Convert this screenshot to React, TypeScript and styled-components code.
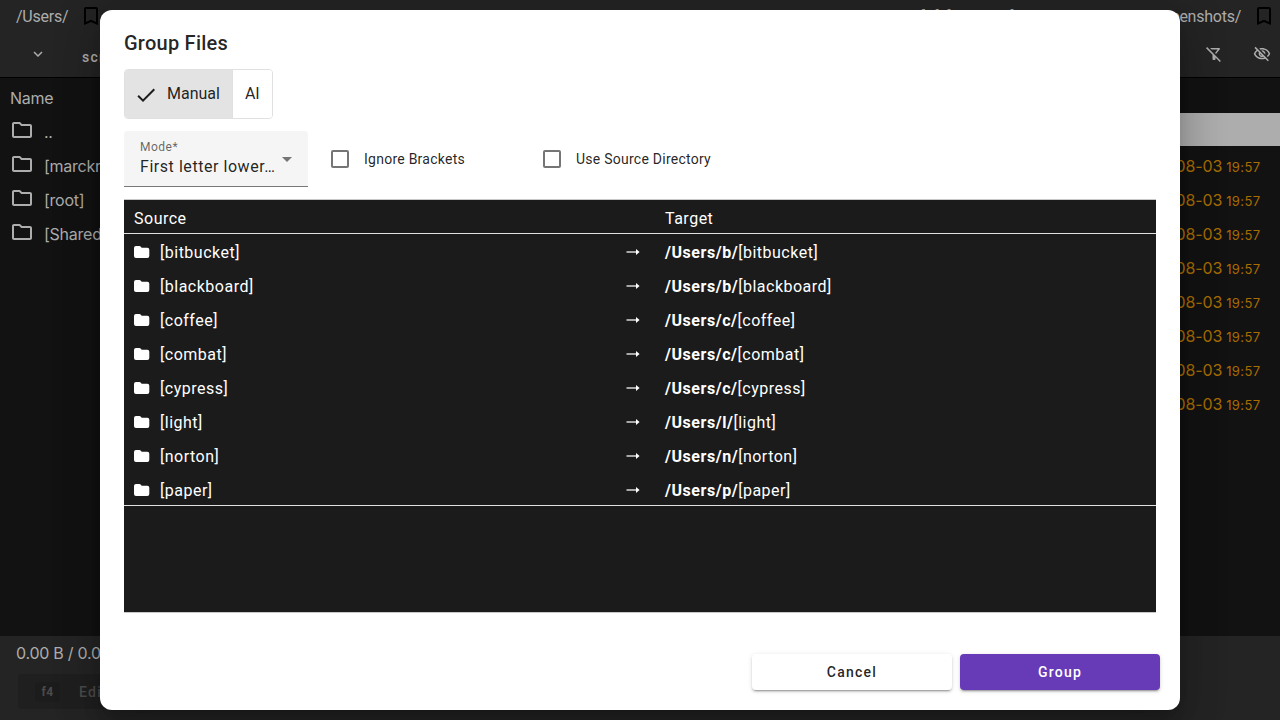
import React from "react";
import styled, { createGlobalStyle } from "styled-components";
import {
  MdBookmarkBorder,
  MdCheck,
  MdExpandMore,
  MdOutlineFilterAltOff,
  MdOutlineFolder,
  MdOutlineVisibilityOff,
} from "react-icons/md";

const GlobalStyle = createGlobalStyle`
  * { box-sizing: border-box; }
  body { margin: 0; overflow: hidden; background: #121212; font-family: Roboto, sans-serif; }
  svg { display: block; flex: none; }
`;

const Page = styled.div`
  position: relative;
  width: 1280px;
  height: 720px;
  display: flex;
  flex-direction: column;
  overflow: hidden;
  background: #121212;
  color: #adadad;
  font: 400 16px/24px Inter, sans-serif;
`;

const PathBar = styled.div`
  display: flex;
  justify-content: space-between;
  height: 32px;
  padding: 0 4px 0 16px;
  background: #242424;
`;

const PathItem = styled.div`
  display: flex;
  align-items: center;
  gap: 11px;
  font-family: Roboto, sans-serif;
  letter-spacing: -0.25px;
  white-space: nowrap;
  svg { color: #000; }
`;

const PathText = styled.span`
  padding-top: 2px;
`;

const TabBar = styled.div`
  display: flex;
  justify-content: space-between;
  align-items: center;
  height: 46px;
  padding: 0 9px 2px 29px;
  background: #242424;
  border-bottom: 1px solid #000;
`;

const TabGroup = styled.div<{ $gap: number }>`
  display: flex;
  align-items: center;
  gap: ${(p) => p.$gap}px;
`;

const TabLabel = styled.span`
  padding-top: 7px;
  font: 500 14px/20px Roboto, sans-serif;
  letter-spacing: 1.25px;
`;

const Panels = styled.div`
  display: flex;
  height: 558px;
`;

const Panel = styled.div`
  flex: 1;
  padding-top: 3px;
`;

const PanelRow = styled.div<{ $selected?: boolean }>`
  display: flex;
  align-items: center;
  gap: 10px;
  height: ${(p) => (p.$selected ? 33 : 34)}px;
  padding-left: 10px;
  background: ${(p) => (p.$selected ? "#adadad" : "transparent")};
  svg { position: relative; top: -2px; }
`;

const FileName = styled.span`
  letter-spacing: -0.25px;
`;

const DateRow = styled.div`
  display: flex;
  justify-content: flex-end;
  align-items: baseline;
  gap: 4px;
  height: 34px;
  padding: 0 20px 0 0;
  line-height: 40px;
  color: #a86c00;
  span { letter-spacing: -0.1px; }
  small { font-size: 13px; letter-spacing: 0.35px; margin-right: -0.35px; }
`;

const HeadSpace = styled.div`
  height: 32px;
`;

const Footer = styled.div`
  flex: 1;
  padding: 5px 16px;
  background: #242424;
`;

const KeyButton = styled.div`
  display: flex;
  align-items: center;
  gap: 19px;
  width: 150px;
  height: 35px;
  margin: 9px 0 0 2px;
  padding-left: 17px;
  border-radius: 4px;
  background: #1f1f1f;
  color: #4b4b4b;
  font: 500 14px/20px Roboto, sans-serif;
  letter-spacing: 1.25px;
`;

const KeyCap = styled.span`
  width: 25px;
  border-radius: 3px;
  background: #1c1c1c;
  text-align: center;
  font-size: 12px;
  font-weight: 700;
  letter-spacing: 0.5px;
`;

const Overlay = styled.div`
  position: absolute;
  inset: 0;
  display: flex;
  align-items: center;
  justify-content: center;
`;

const Dialog = styled.section`
  display: flex;
  flex-direction: column;
  width: 1080px;
  height: 700px;
  padding: 17px 24px 20px;
  border-radius: 12px;
  background: #fff;
  color: rgba(0, 0, 0, 0.87);
  box-shadow: 0 11px 15px -7px rgba(0, 0, 0, 0.2), 0 24px 38px 3px rgba(0, 0, 0, 0.14),
    0 9px 46px 8px rgba(0, 0, 0, 0.12);
  font: 400 16px/24px Roboto, sans-serif;
`;

const Title = styled.h2`
  margin: 0 0 10px;
  font-size: 20px;
  line-height: 32px;
  font-weight: 500;
  letter-spacing: 0.25px;
`;

const Toggle = styled.div`
  display: flex;
  align-self: flex-start;
  width: 149px;
  height: 50px;
  overflow: hidden;
  border: 1px solid #e0e0e0;
  border-radius: 4px;
`;

const ToggleOption = styled.div<{ $on?: boolean }>`
  display: flex;
  align-items: center;
  gap: 9px;
  padding: 0 12px 0 ${(p) => (p.$on ? 9 : 12)}px;
  background: ${(p) => (p.$on ? "#e3e3e3" : "#fff")};
  & + & { border-left: 1px solid #e0e0e0; }
  svg { margin-top: 2px; }
`;

const Options = styled.div`
  display: flex;
  height: 56px;
  margin: 12px 0;
`;

const Select = styled.div`
  display: flex;
  align-items: center;
  width: 184px;
  margin-right: 23px;
  padding: 0 16px;
  border-bottom: 1px solid #777;
  border-radius: 4px 4px 0 0;
  background: #f5f5f5;
`;

const SelectText = styled.div`
  flex: 1;
  padding-top: 1px;
  letter-spacing: 0.55px;
  white-space: nowrap;
`;

const SelectLabel = styled.div`
  color: rgba(0, 0, 0, 0.6);
  font-size: 12px;
  line-height: 16px;
  letter-spacing: 0.5px;
`;

const Caret = styled.span`
  margin-top: 1px;
  border: 5px solid transparent;
  border-top-color: #757575;
  border-bottom: 0;
`;

const CheckOption = styled.label`
  display: flex;
  align-items: center;
  gap: 15px;
  width: 212px;
  font-size: 14px;
  line-height: 20px;
  letter-spacing: 0.25px;
`;

const Box = styled.span`
  width: 18px;
  height: 18px;
  border: 2px solid #757575;
  border-radius: 2px;
`;

const Table = styled.div`
  height: 414px;
  border-top: 1px solid #c8c8c8;
  border-bottom: 1px solid #c8c8c8;
  background: #1b1b1b;
  color: #fff;
  letter-spacing: 0.5px;
  b { letter-spacing: 0.54px; }
`;

const Row = styled.div<{ $line?: boolean }>`
  display: grid;
  grid-template-columns: 26px 466px 39px 1fr;
  align-items: center;
  height: 34px;
  padding: 5px 10px 0;
  border-bottom: 1px solid ${(p) => (p.$line ? "#e0e0e0" : "transparent")};
`;

const FolderIcon = styled.svg`
  margin-top: -2px;
`;

const Arrow = styled.svg`
  margin-top: -2px;
`;

const Actions = styled.div`
  display: flex;
  gap: 8px;
  justify-content: flex-end;
  margin: auto -4px 0 0;
`;

const Button = styled.button<{ $primary?: boolean }>`
  width: 200px;
  height: 36px;
  padding: 0;
  border: 0;
  border-radius: 4px;
  background: ${(p) => (p.$primary ? "#673ab7" : "#fff")};
  color: ${(p) => (p.$primary ? "#fff" : "rgba(0, 0, 0, 0.87)")};
  box-shadow: 0 3px 1px -2px rgba(0, 0, 0, 0.2), 0 2px 2px rgba(0, 0, 0, 0.14), 0 1px 5px rgba(0, 0, 0, 0.12);
  font: 500 14px/36px Roboto, sans-serif;
  letter-spacing: 1.25px;
`;

const folders = ["..", "[marckronberg]", "[root]", "[Shared]"];
const names = ["bitbucket", "blackboard", "coffee", "combat", "cypress", "light", "norton", "paper"];

export default function App() {
  return (
    <Page>
      <GlobalStyle />
      <PathBar>
        <PathItem><PathText>/Users/</PathText><MdBookmarkBorder size={24} /></PathItem>
        <PathItem>
          <PathText>/Users/marckronberg/WebProjects/fnf/files-and-folders/docs/public/screenshots/</PathText>
          <MdBookmarkBorder size={24} />
        </PathItem>
      </PathBar>
      <TabBar>
        <TabGroup $gap={35}>
          <MdExpandMore size={18} />
          <TabLabel>screenshots</TabLabel>
        </TabGroup>
        <TabGroup $gap={30}>
          <MdOutlineFilterAltOff size={18} />
          <MdOutlineVisibilityOff size={18} />
        </TabGroup>
      </TabBar>
      <Panels>
        <Panel>
          <PanelRow><FileName>Name</FileName></PanelRow>
          {folders.map((f) => (
            <PanelRow key={f}>
              <MdOutlineFolder size={24} />
              <FileName>{f}</FileName>
            </PanelRow>
          ))}
        </Panel>
        <Panel>
          <HeadSpace />
          <PanelRow $selected />
          {names.map((n) => (
            <DateRow key={n}><span>2023-08-03</span><small>19:57</small></DateRow>
          ))}
        </Panel>
      </Panels>
      <Footer>
        <FileName>0.00 B / 0.00 B</FileName>
        <KeyButton><KeyCap>f4</KeyCap>Edit</KeyButton>
      </Footer>
      <Overlay>
        <Dialog>
          <Title>Group Files</Title>
          <Toggle>
            <ToggleOption $on><MdCheck size={24} />Manual</ToggleOption>
            <ToggleOption>AI</ToggleOption>
          </Toggle>
          <Options>
            <Select>
              <SelectText>
                <SelectLabel>Mode*</SelectLabel>
                First letter lower…
              </SelectText>
              <Caret />
            </Select>
            <CheckOption><Box />Ignore Brackets</CheckOption>
            <CheckOption><Box />Use Source Directory</CheckOption>
          </Options>
          <Table>
            <Row $line><span>Source</span><span /><span /><span>Target</span></Row>
            {names.map((n, i) => (
              <Row key={n} $line={i === names.length - 1}>
                <FolderIcon width="16" height="14" viewBox="0 0 16 14">
                  <path
                    d="M2 1H5.4C6 1 6.4 1.2 6.8 1.7L7.7 2.8H13.3Q15.3 2.8 15.3 4.8V11Q15.3 13 13.3 13H2Q0 13 0 11V3Q0 1 2 1Z"
                    fill="#fff"
                  />
                </FolderIcon>
                <span>[{n}]</span>
                <Arrow width="14" height="8" viewBox="0 0 14 8">
                  <path d="M0.5 4H11.5" stroke="#ccc" strokeWidth="1.6" />
                  <path d="M10 1L13.6 4L10 7Z" fill="#fff" />
                </Arrow>
                <span><b>/Users/{n[0]}/</b>[{n}]</span>
              </Row>
            ))}
          </Table>
          <Actions>
            <Button>Cancel</Button>
            <Button $primary>Group</Button>
          </Actions>
        </Dialog>
      </Overlay>
    </Page>
  );
}
